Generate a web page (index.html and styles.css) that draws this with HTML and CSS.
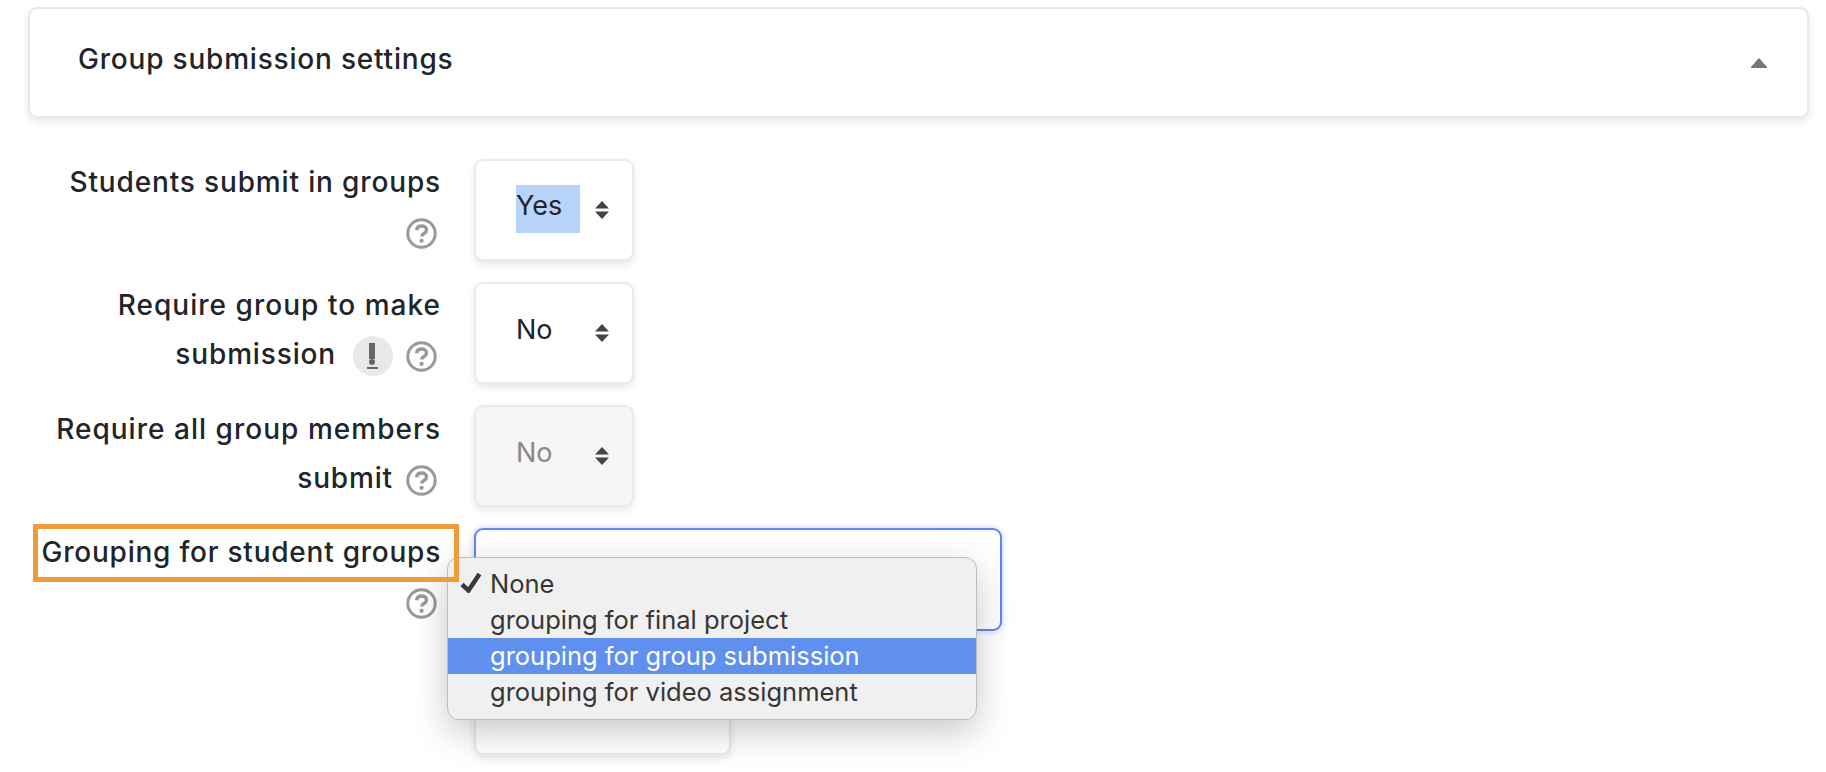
FILE: index.html
```html
<!DOCTYPE html>
<html lang="en">
<head>
<meta charset="utf-8">
<title>Group submission settings</title>
<link rel="stylesheet" href="styles.css">
</head>
<body>
<svg class="defs" width="0" height="0" aria-hidden="true">
  <symbol id="help" viewBox="0 0 31 31">
    <circle cx="15.5" cy="15.5" r="13.7" fill="none" stroke="#999" stroke-width="3"/>
    <path d="M10.6 12.2c.3-2.7 2.3-4.2 5-4.2 2.8 0 4.9 1.6 4.9 4 0 3.6-4.8 3.3-4.8 6.6" fill="none" stroke="#999" stroke-width="3.400"/>
    <circle cx="15.6" cy="22.8" r="2.100" fill="#999"/>
  </symbol>
  <symbol id="updown" viewBox="0 0 14 18">
    <path d="M7 0l7 7.500H0zM0 10.500h14L7 18z" fill="#444"/>
  </symbol>
</svg>
<main class="page">
  <section class="card">
    <h2 class="card-title">Group submission settings</h2>
    <svg class="caret" viewBox="0 0 16 10" aria-hidden="true"><path d="M8 0l8 9v1H0V9z" fill="#757575"/></svg>
  </section>
  <form class="form">
    <div class="label">Students submit in groups<br><svg class="help"><use href="#help"/></svg></div>
    <div class="select"><span class="value picked">Yes</span><svg class="updown"><use href="#updown"/></svg></div>

    <div class="label label-make"><span class="wider">Require group to make</span><br>submission<span class="alert"><svg viewBox="0 0 40 40" width="40" height="40" aria-hidden="true"><rect x="16" y="7" width="6" height="16" fill="#666"/><circle cx="19" cy="26" r="3" fill="#666"/><rect x="14" y="31" width="11" height="2" fill="#666"/></svg></span><svg class="help"><use href="#help"/></svg></div>
    <div class="select"><span class="value">No</span><svg class="updown"><use href="#updown"/></svg></div>

    <div class="label label-low"><span class="wider">Require all group members</span><br>submit<svg class="help help-gap"><use href="#help"/></svg></div>
    <div class="select disabled"><span class="value">No</span><svg class="updown"><use href="#updown"/></svg></div>

    <div class="label label-low"><span class="tighter">Grouping for student groups</span><br><svg class="help"><use href="#help"/></svg></div>
    <div class="select wide focused"><span class="value"></span><svg class="updown"><use href="#updown"/></svg></div>

    <div class="label"></div>
    <div class="select medium"></div>
  </form>
  <div class="menu">
    <div class="option"><svg class="check" viewBox="0 0 22 21" aria-hidden="true"><path d="M2 12.500l6.500 6L19.500 2" fill="none" stroke="#3a3a3a" stroke-width="4.500"/></svg>None</div>
    <div class="option">grouping for final project</div>
    <div class="option active">grouping for group submission</div>
    <div class="option">grouping for video assignment</div>
  </div>
  <div class="highlight-box"></div>
</main>
</body>
</html>
```
FILE: styles.css
```css
* { box-sizing: border-box; }
html, body { margin: 0; padding: 0; background: #fff; }
body {
  height: 772px;
  overflow: hidden;
  font-family: "Inter", "Liberation Sans", sans-serif;
  color: #212529;
}
.defs { position: absolute; }
.page { position: relative; padding: 7px 17px 0 28px; }

.card {
  height: 111px;
  border: 2px solid #e6e8f0;
  border-radius: 9px;
  background: #fff;
  box-shadow: 0 4px 7px rgba(40, 40, 70, .1);
  display: flex;
  align-items: center;
  justify-content: space-between;
  padding: 0 40px 0 48px;
}
.card-title {
  margin: 0 0 8px;
  font-size: 28px;
  font-weight: 500;
  letter-spacing: .8px;
}
.caret { width: 16px; height: 10px; }

.form {
  margin-top: 41px;
  display: grid;
  grid-template-columns: 413px 1fr;
  column-gap: 33px;
  row-gap: 21px;
  align-items: start;
}
.label {
  text-align: right;
  font-size: 28px;
  font-weight: 500;
  line-height: 49px;
  letter-spacing: .85px;
  white-space: nowrap;
  margin-top: -1px;
}
.label-low { margin-top: 0; }
.wider { letter-spacing: 1.03px; }
.tighter { letter-spacing: .76px; }
.help {
  width: 31px;
  height: 31px;
  margin-right: 4px;
  vertical-align: middle;
}
.help-gap { margin-left: 13px; }
.alert {
  display: inline-block;
  width: 40px;
  height: 40px;
  margin: 0 13px 0 17px;
  border-radius: 50%;
  background: #e9e9e9;
  vertical-align: middle;
}
.alert svg { display: block; }

.select {
  width: 160px;
  height: 102px;
  border: 2px solid #e8eaf0;
  border-radius: 9px;
  background: #fff;
  box-shadow: 0 4px 7px rgba(40, 40, 70, .1);
  display: flex;
  align-items: center;
  justify-content: space-between;
  padding: 0 23px 0 40px;
  font-size: 27px;
}
.value { display: block; margin-top: -7px; }
.picked {
  background: #b8d4fb;
  width: 64px;
  height: 48px;
  line-height: 42px;
  margin-top: -3px;
}
.updown { width: 14px; height: 18px; flex: none; }
.disabled { background: #f6f6f6; color: #888; }
.wide {
  width: 528px;
  height: 103px;
}
.focused {
  border-color: #6184ee;
  box-shadow: 0 0 6px rgba(80, 120, 240, .35);
}
.medium { width: 257px; height: 103px; }

.menu {
  position: absolute;
  left: 447px;
  top: 557px;
  width: 530px;
  height: 163px;
  padding: 8px 0;
  border: 1px solid #bdbdbd;
  border-radius: 12px;
  background: #f0f0f0;
  box-shadow: 0 12px 36px rgba(0, 0, 0, .22);
  font-size: 25.500px;
  color: #363636;
}
.option {
  position: relative;
  height: 36px;
  line-height: 35px;
  padding-left: 42px;
  white-space: nowrap;
}
.active { background: #6090ef; color: #fff; }
.check {
  position: absolute;
  left: 12px;
  top: 6px;
  width: 22px;
  height: 21px;
}
.highlight-box {
  position: absolute;
  left: 33px;
  top: 524px;
  width: 426px;
  height: 58px;
  border: 5px solid #f19b38;
}
```
